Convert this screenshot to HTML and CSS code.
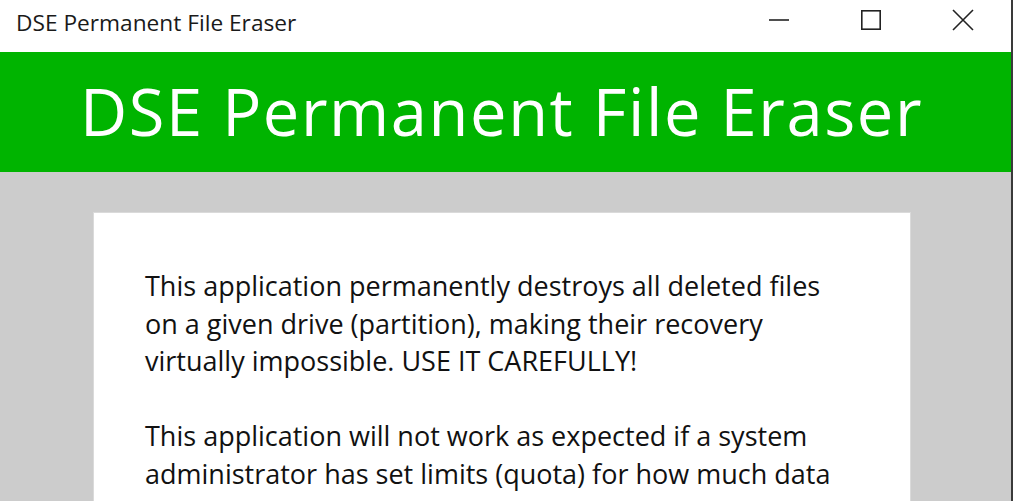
FILE: index.html
```html
<!DOCTYPE html>
<html>
<head>
<meta charset="utf-8">
<link rel="stylesheet" href="styles.css">
</head>
<body>
<div class="window">
  <div class="titlebar">
    <div class="title">DSE Permanent File Eraser</div>
    <div class="controls">
      <div class="ctl"><svg width="22" height="22" viewBox="0 0 22 22"><line x1="1" y1="11" x2="21" y2="11" stroke="#222" stroke-width="1.6"/></svg></div>
      <div class="ctl"><svg width="22" height="22" viewBox="0 0 22 22"><rect x="1.8" y="1.8" width="18.4" height="18.4" fill="none" stroke="#222" stroke-width="1.6"/></svg></div>
      <div class="ctl"><svg width="24" height="24" viewBox="0 0 24 24"><path d="M2 2 L22 22 M22 2 L2 22" stroke="#222" stroke-width="1.6"/></svg></div>
    </div>
  </div>
  <div class="banner">DSE Permanent File Eraser</div>
  <div class="content">
    <div class="card">
      <p>This application permanently destroys all deleted files<br>on a given drive (partition), making their recovery<br>virtually impossible. USE IT CAREFULLY!</p>
      <p>This application will not work as expected if a system<br>administrator has set limits (quota) for how much data</p>
    </div>
  </div>
</div>
</body>
</html>
```
FILE: styles.css
```css
html, body {
  margin: 0;
  padding: 0;
  width: 1013px;
  height: 501px;
  overflow: hidden;
  background: #cccccc;
}
.window {
  width: 1013px;
  height: 501px;
  display: flex;
  flex-direction: column;
  box-sizing: border-box;
  border-right: 2px solid #3a3a3a;
  overflow: hidden;
  font-family: "Open Sans", "Noto Sans", sans-serif;
}
.titlebar {
  height: 52px;
  flex: none;
  background: #ffffff;
  display: flex;
  align-items: center;
  justify-content: space-between;
}
.title {
  padding-left: 16px;
  font-size: 22.7px;
  color: #1a1a1a;
  padding-bottom: 8px;
}
.controls {
  display: flex;
  height: 100%;
  margin-right: 2px;
}
.ctl {
  width: 92px;
  display: flex;
  align-items: center;
  justify-content: center;
  padding-bottom: 13px;
}
.banner {
  height: 120px;
  flex: none;
  background: #00b400;
  color: #ffffff;
  font-size: 65px;
  letter-spacing: 1.6px;
  display: flex;
  align-items: center;
  justify-content: center;
  padding: 0 8px 2px 0;
  box-sizing: border-box;
}
.content {
  flex: 1;
  background: #cccccc;
  padding: 40px 100px 0 93px;
}
.card {
  background: #ffffff;
  border: 1px solid #dadada;
  height: 400px;
  padding: 54px 0 0 51px;
  box-sizing: border-box;
}
.card p {
  margin: 0 0 37.5px 0;
  font-size: 27px;
  line-height: 37.5px;
  color: #111111;
}
```
